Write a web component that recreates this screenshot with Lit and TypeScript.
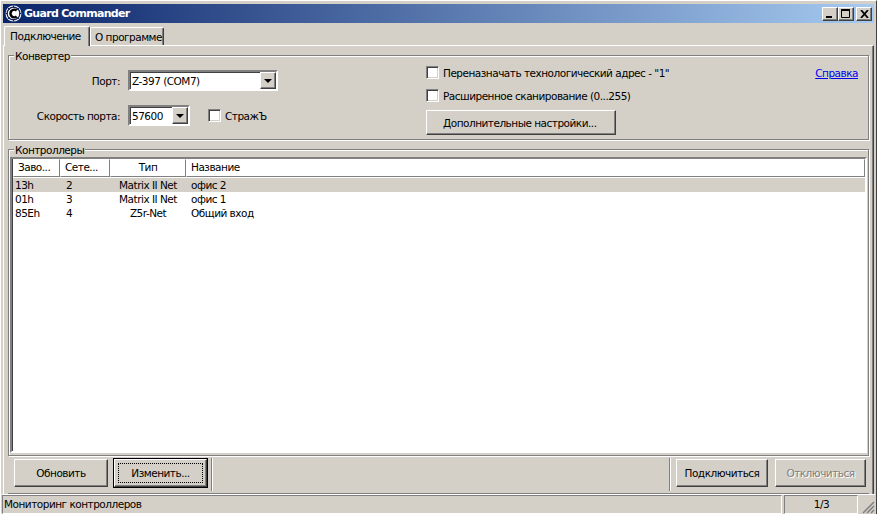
import { LitElement, html, css } from "lit";
import { customElement } from "lit/decorators.js";

const rows = [
  ["13h", "2", "Matrix II Net", "офис 2"],
  ["01h", "3", "Matrix II Net", "офис 1"],
  ["85Eh", "4", "Z5r-Net", "Общий вход"],
];

@customElement("app-root")
export class AppRoot extends LitElement {
  static styles = css`
    :host { display: block; width: 877px; height: 514px; overflow: hidden; font: 10.5px "DejaVu Sans", sans-serif; letter-spacing: -0.5px; color: #000; background: #d4d0c8; white-space: nowrap; }
    * { box-sizing: border-box; }
    .window { width: 877px; height: 514px; display: flex; flex-direction: column; padding: 3px 2px 0 2px; border-top: 1px solid #fff; border-left: 1px solid #fff; border-right: 1px solid #404040; }
    .title { height: 19px; flex: none; display: flex; align-items: center; padding: 0 2px; background: linear-gradient(90deg, #0a246a, #a6caf0); color: #fff; font: bold 11px "DejaVu Sans", sans-serif; letter-spacing: -0.7px; }
    .logo { width: 17px; height: 17px; margin-right: 2px; flex: none; }
    .title span { flex: 1; }
    .wb { width: 16px; height: 14px; flex: none; background: #d4d0c8; border: 1px solid; border-color: #fff #404040 #404040 #fff; box-shadow: inset -1px -1px 0 #808080; display: flex; align-items: center; justify-content: center; }
    .wb svg { display: block; }
    .wb.last { margin-left: 2px; }
    .tabs { display: flex; height: 22px; flex: none; padding: 2px 0 0 2px; align-items: flex-end; }
    .tab { border: 1px solid; border-color: #fff #404040 transparent #fff; border-bottom: none; border-radius: 2px 2px 0 0; box-shadow: inset -1px 0 0 #808080; padding: 0 5px; height: 18px; line-height: 18px; }
    .tab.on { height: 20px; position: relative; top: 1px; z-index: 1; background: #d4d0c8; margin-left: -1px; width: 86px; }
    .tab.off { width: 74px; padding-left: 4px; }
    .panel { flex: 1; min-height: 0; border: 1px solid; border-color: #fff #404040 #404040 #fff; border-bottom: none; box-shadow: inset -1px 0 0 #808080; padding: 9px 4px 0 4px; display: flex; flex-direction: column; }
    .group { position: relative; border: 1px solid #808080; box-shadow: 1px 1px 0 #fff, inset 1px 1px 0 #fff; }
    .legend { position: absolute; left: 5px; top: -6px; background: #d4d0c8; padding: 0 1px; line-height: 12px; height: 12px; }
    .conv { height: 85px; flex: none; display: flex; margin-bottom: 9px; }
    .cleft { width: 417px; flex: none; padding: 14px 0 0 0; display: grid; grid-template-columns: 111px 150px; grid-auto-rows: 21px; row-gap: 14px; column-gap: 8px; align-items: center; align-content: start; }
    .lab { text-align: right; }
    .combo { height: 21px; background: #fff; border: 2px solid; border-color: #808080 #fff #fff #808080; box-shadow: inset 1px 1px 0 #404040; display: flex; align-items: center; padding-left: 2px; justify-content: space-between; }
    .combo.sm { width: 62px; flex: none; }
    .arrow { width: 16px; height: 17px; background: #d4d0c8; border: 1px solid; border-color: #fff #404040 #404040 #fff; box-shadow: inset -1px -1px 0 #808080; display: flex; align-items: center; justify-content: center; flex: none; }
    .arrow i { display: block; width: 0; height: 0; border: 4px solid transparent; border-top: 4px solid #000; border-bottom: 0; }
    .chk { width: 13px; height: 13px; flex: none; background: #fff; border: 1px solid; border-color: #808080 #fff #fff #808080; box-shadow: inset 1px 1px 0 #404040, inset -1px -1px 0 #d4d0c8; }
    .spd { display: flex; align-items: center; }
    .spd .chk { margin-left: 18px; margin-right: 4px; }
    .cright { flex: 1; padding-top: 10px; display: flex; flex-direction: column; position: relative; }
    .crow { display: flex; align-items: center; height: 13px; margin-bottom: 10px; }
    .crow .chk { margin-right: 4px; }
    .crow.b { margin-bottom: 8px; }
    .link { position: absolute; right: 10px; top: 11px; color: #0000ee; text-decoration: underline; }
    .btn { background: #d4d0c8; border: 1px solid; border-color: #fff #404040 #404040 #fff; box-shadow: inset -1px -1px 0 #808080; display: flex; align-items: center; justify-content: center; flex: none; }
    .big { width: 190px; height: 25px; justify-content: flex-start; padding-left: 16px; }
    .ctrl { display: flex; flex-direction: column; padding: 6px 1px 1px 1px; height: 307px; flex: none; }
    .list { flex: none; height: 296px; margin-top: 1px; background: #fff; border: 2px solid; border-color: #808080 #fff #fff #808080; box-shadow: inset 1px 1px 0 #404040; }
    .head, .row { display: grid; grid-template-columns: 47px 50px 76px 1fr; }
    .head { height: 18px; margin-left: 1px; }
    .head div { border: 1px solid; border-color: #fff #808080 #808080 #fff; line-height: 15px; padding-left: 4px; }
    .head div.c { text-align: center; padding: 0; }
    .rows { padding: 1px 0 0 1px; }
    .row { height: 14px; line-height: 14px; }
    .row.sel { background: #d4d0c8; }
    .row div { padding-left: 2px; }
    .row div.n { padding-left: 6px; }
    .row div.c { text-align: center; padding: 0; }
    .row div.n2 { padding-left: 5px; }
    .bar { height: 37px; flex: 1; display: flex; align-items: flex-start; padding-top: 3px; border-bottom: 1px solid #808080; }
    .bar .btn { height: 28px; }
    .sep { width: 2px; height: 33px; flex: none; border-left: 1px solid #808080; border-right: 1px solid #fff; margin-top: -1px; }
    .b1 { width: 94px; margin-left: 6px; }
    .b2 { width: 93px; margin-left: 6px; margin-right: 4px; outline: 1px solid #000; position: relative; }
    .b2::after { content: ""; position: absolute; inset: 3px; border: 1px dotted #000; }
    .sp { flex: 1; }
    .b3 { width: 92px; margin-left: 5px; }
    .b4 { width: 91px; margin-left: 7px; margin-right: 3px; color: #808080; text-shadow: 1px 1px 0 #fff; }
    .status { height: 20px; flex: none; display: flex; margin: 0 -1px; border-top: 1px solid #fff; }
    .sc { border: 1px solid; border-color: #808080 #fff #fff #808080; line-height: 16px; padding-left: 1px; height: 19px; }
    .s1 { flex: 1; margin-right: 2px; }
    .s2 { width: 74px; text-align: center; margin-right: 2px; }
    .s3 { width: 15px; position: relative; overflow: hidden; border: none; }
    .s3 svg { position: absolute; right: 0; bottom: 0; }
  `;

  render() {
    return html`<div class="window">
      <div class="title">
        <svg class="logo" viewBox="0 0 16 16">
          <circle cx="8" cy="8" r="7.5" fill="#fff" />
          <circle cx="8" cy="8" r="6" fill="none" stroke="#10204f" stroke-width="1.2" />
          <path d="M11 5.200A3.600 3.600 0 1 0 11 10.800" fill="none" stroke="#000" stroke-width="2.400" />
          <path d="M8 .5v2M8 13.500v2M.5 8h2M13.500 8h2M3 3l1.300 1.300M13 3l-1.300 1.300M3 13l1.300-1.300M13 13l-1.300-1.300" stroke="#0a246a" />
        </svg>
        <span>Guard Commander</span>
        <div class="wb"><svg width="8" height="8"><rect x="0" y="6" width="6" height="2" /></svg></div>
        <div class="wb"><svg width="10" height="9"><path d="M.5 1.500h8v7h-8z" fill="none" stroke="#000" /><rect x="0" y="0" width="9" height="2" /></svg></div>
        <div class="wb last"><svg width="9" height="8"><path d="M1 0l7 8M8 0L1 8" stroke="#000" stroke-width="1.800" fill="none" /></svg></div>
      </div>
      <div class="tabs">
        <div class="tab on">Подключение</div>
        <div class="tab off">О программе</div>
      </div>
      <div class="panel">
        <div class="group conv">
          <div class="legend">Конвертер</div>
          <div class="cleft">
            <div class="lab">Порт:</div>
            <div class="combo"><span>Z-397 (COM7)</span><div class="arrow"><i></i></div></div>
            <div class="lab">Скорость порта:</div>
            <div class="spd">
              <div class="combo sm"><span>57600</span><div class="arrow"><i></i></div></div>
              <div class="chk"></div><span>СтражЪ</span>
            </div>
          </div>
          <div class="cright">
            <div class="crow"><div class="chk"></div><span>Переназначать технологический адрес - "1"</span></div>
            <div class="crow b"><div class="chk"></div><span>Расширенное сканирование (0...255)</span></div>
            <div class="btn big">Дополнительные настройки...</div>
            <div class="link">Справка</div>
          </div>
        </div>
        <div class="group ctrl">
          <div class="legend">Контроллеры</div>
          <div class="list">
            <div class="head"><div>Заво...</div><div>Сете...</div><div class="c">Тип</div><div>Название</div></div>
            <div class="rows">
              ${rows.map((r, i) => html`<div class="row ${i === 0 ? "sel" : ""}">
                <div>${r[0]}</div><div class="n">${r[1]}</div><div class="c">${r[2]}</div><div class="n2">${r[3]}</div>
              </div>`)}
            </div>
          </div>
        </div>
        <div class="bar">
          <div class="btn b1">Обновить</div>
          <div class="btn b2">Изменить...</div>
          <div class="sep"></div>
          <div class="sp"></div>
          <div class="sep"></div>
          <div class="btn b3">Подключиться</div>
          <div class="btn b4">Отключиться</div>
        </div>
      </div>
      <div class="status">
        <div class="sc s1">Мониторинг контроллеров</div>
        <div class="sc s2">1/3</div>
        <div class="sc s3"><svg width="14" height="14"><path d="M13 2L2 13M13 6L6 13M13 10L10 13" stroke="#808080" stroke-width="1.500" /></svg></div>
      </div>
    </div>`;
  }
}
